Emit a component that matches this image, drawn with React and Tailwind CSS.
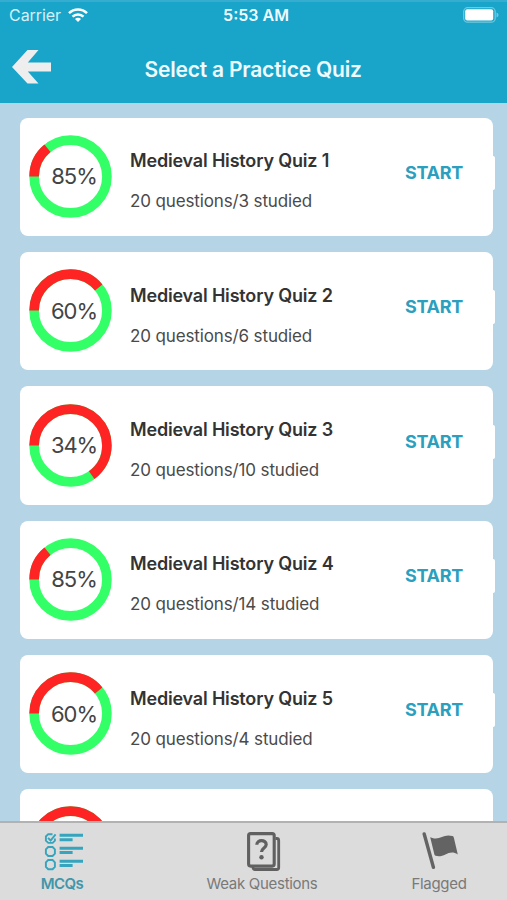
const quizzes = [
  { n: 1, score: 85, studied: 3 },
  { n: 2, score: 60, studied: 6 },
  { n: 3, score: 34, studied: 10 },
  { n: 4, score: 85, studied: 14 },
  { n: 5, score: 60, studied: 4 },
  { n: 6, score: 34, studied: 8 },
];

function Ring({ score }) {
  const missed = 99.1 - score;
  return (
    <div className="grid size-[83px] shrink-0 place-items-center">
      <svg viewBox="0 0 83 83" className="col-start-1 row-start-1 size-[83px]">
        <circle cx="41.5" cy="41.5" r="36.4" fill="none" stroke="#33ff66" strokeWidth="9.6" />
        <circle
          cx="41.5"
          cy="41.5"
          r="36.4"
          fill="none"
          stroke="#ff2424"
          strokeWidth="9.6"
          pathLength="100"
          strokeDasharray={`${missed} 100`}
          transform="rotate(180 41.5 41.5)"
        />
      </svg>
      <span className="col-start-1 row-start-1 pl-[7px] text-[22px] leading-none tracking-[-1.1px] text-[#444]">
        {score}%
      </span>
    </div>
  );
}

function QuizCard({ n, score, studied }) {
  return (
    <div className="mb-[15.8px] flex h-[118.5px] shrink-0 items-center">
      <div className="flex h-full w-[473px] items-center rounded-[8px] bg-white pl-[9px]">
        <div className="-mt-[1px]">
          <Ring score={score} />
        </div>
        <div className="mt-[9px] ml-[18px] w-[275px] whitespace-nowrap">
          <div className="text-[18px] leading-[24px] font-semibold tracking-[-0.18px] text-[#333]">
            Medieval History Quiz {n}
          </div>
          <div className="mt-[16px] text-[17px] leading-[24px] tracking-[-0.13px] text-[#4a4a4a]">
            20 questions/{studied} studied
          </div>
        </div>
        <button className="-mt-[8px] text-[18px] leading-none font-bold tracking-[-0.3px] text-[#2b9fbd]">START</button>
      </div>
      <div className="-mt-[8px] h-[34px] w-[2px] rounded-r-[2px] bg-white" />
    </div>
  );
}

function ChecklistIcon() {
  return (
    <svg width="40" height="40" viewBox="0 0 40 40" fill="none" stroke="#35a4bd">
      <g strokeWidth="1.9">
        <path d="M8.5 2.2H4.2L1.9 4.5v4.2l2.4 2.2h4.4l2.2-2.2V6.5" />
        <path d="M4.2 15h4.4l2.3 2.3v4.4L8.6 24H4.2l-2.3-2.3v-4.4z" />
        <path d="M4.2 28h4.4l2.3 2.3v4.6l-2.3 2.3H4.2l-2.3-2.3v-4.6z" />
        <path d="m4 5.8 2.6 2.7 5-6.2" />
      </g>
      <path d="M15.6 3.2h23.4M15.6 16.2h23.4M15.6 29.2h23.4" strokeWidth="3" />
      <path d="M15.6 7.7h13M15.6 20.6h13M15.6 33.6h13" strokeWidth="3" />
    </svg>
  );
}

function QuestionCardsIcon() {
  return (
    <svg width="34" height="40" viewBox="0 0 34 40" fill="none" stroke="#606060">
      <path d="M28.5 6.5h1.2a2 2 0 0 1 2 2v27a2 2 0 0 1-2 2H8a2 2 0 0 1-2-2v-1" strokeWidth="2.8" />
      <rect x="1.6" y="1.6" width="25.6" height="32.5" rx="2" strokeWidth="3.1" />
      <path d="M9.8 12.8c0-5.6 9.4-5.5 9.4-.2 0 3.4-4.7 3.4-4.7 7.4" strokeWidth="3.2" />
      <circle cx="14.5" cy="25.2" r="2.2" fill="#606060" stroke="none" />
    </svg>
  );
}

function FlagIcon() {
  return (
    <svg width="36" height="38" viewBox="0 0 36 38" fill="#636363">
      <path d="m2.2 2 9.2 33.3" stroke="#636363" strokeWidth="3.4" strokeLinecap="round" />
      <path d="M8.2 5.2c10 4.2 12.2-3.9 22.2-1.2.8.2 1.2.7 1.4 1.4l4 17c-9-6.2-13.4 4.1-22.2 1.4-.7-.2-1-.7-1.2-1.3z" />
    </svg>
  );
}

export default function App() {
  return (
    <div className="flex h-[900px] w-[507px] flex-col overflow-hidden bg-[#b5d4e6] font-['Inter','Liberation_Sans',sans-serif]">
      <header className="h-[103px] shrink-0 border-t-2 border-[#35acd0] bg-[#19a4ca] text-[#eefbff]">
        <div className="grid h-[26px] grid-cols-3 items-center pr-[8px] pl-[9px] text-[16px] leading-none">
          <div className="flex items-center gap-[7px]">
            <span className="text-[16px] tracking-[-0.05px] text-[#d4f1f9]">Carrier</span>
            <svg width="20" height="14" viewBox="0 0 20 14" fill="none" stroke="#fff" strokeWidth="2.5">
              <path d="M1 5.2a12.8 12.8 0 0 1 18 0" />
              <path d="M4.5 8.7a7.8 7.8 0 0 1 11 0" />
              <path d="M7 11a4.2 4.2 0 0 1 6 0l-3 3z" fill="#fff" stroke="none" />
            </svg>
          </div>
          <span className="pl-[4px] text-center font-semibold">5:53 AM</span>
          <svg className="justify-self-end" width="36" height="16" viewBox="0 0 36 16">
            <rect x=".7" y=".7" width="31.5" height="14.5" rx="4" fill="none" stroke="#70c7de" strokeWidth="1.3" />
            <rect x="2.2" y="2.3" width="28" height="11.2" rx="2" fill="#fff" />
            <path d="M33.5 5.6c2.7.8 2.7 4.2 0 5z" fill="#70c7de" />
          </svg>
        </div>
        <div className="flex h-[75px] items-center pt-[8px] pl-[12px]">
          <button aria-label="Back" className="-mt-[5px]">
            <svg width="39" height="34" viewBox="0 0 39 34" fill="#eee">
              <path d="M0 17 15.5 0h11L15.8 12.4H39v9H15.8L26.5 33.5h-11z" />
            </svg>
          </button>
          <h1 className="ml-[93.5px] whitespace-nowrap text-[21px] leading-none font-semibold tracking-[-0.2px]">
            Select a Practice Quiz
          </h1>
        </div>
      </header>

      <main className="flex min-h-0 flex-1 flex-col overflow-hidden pt-[14.7px] pl-[20px]">
        {quizzes.map((quiz) => (
          <QuizCard key={quiz.n} {...quiz} />
        ))}
      </main>

      <nav className="flex h-[79px] shrink-0 border-t-2 border-[#b2b2b2] bg-[#dcdcdc] text-[15px] leading-none whitespace-nowrap text-[#797979]">
        <div className="flex w-[124px] flex-col items-center pt-[9px]">
          <div className="pl-[3px]">
            <ChecklistIcon />
          </div>
          <span className="mt-[4px] font-semibold tracking-[-0.5px] text-[#4296a9]">MCQs</span>
        </div>
        <div className="flex w-[276px] flex-col items-center pt-[9px]">
          <div className="pl-[3px]">
            <QuestionCardsIcon />
          </div>
          <span className="mt-[4px] tracking-[-0.3px]">Weak Questions</span>
        </div>
        <div className="flex w-[78px] flex-col items-center pt-[9px]">
          <div className="pl-[2px]">
            <FlagIcon />
          </div>
          <span className="mt-[6px] tracking-[-0.3px]">Flagged</span>
        </div>
      </nav>
    </div>
  );
}
